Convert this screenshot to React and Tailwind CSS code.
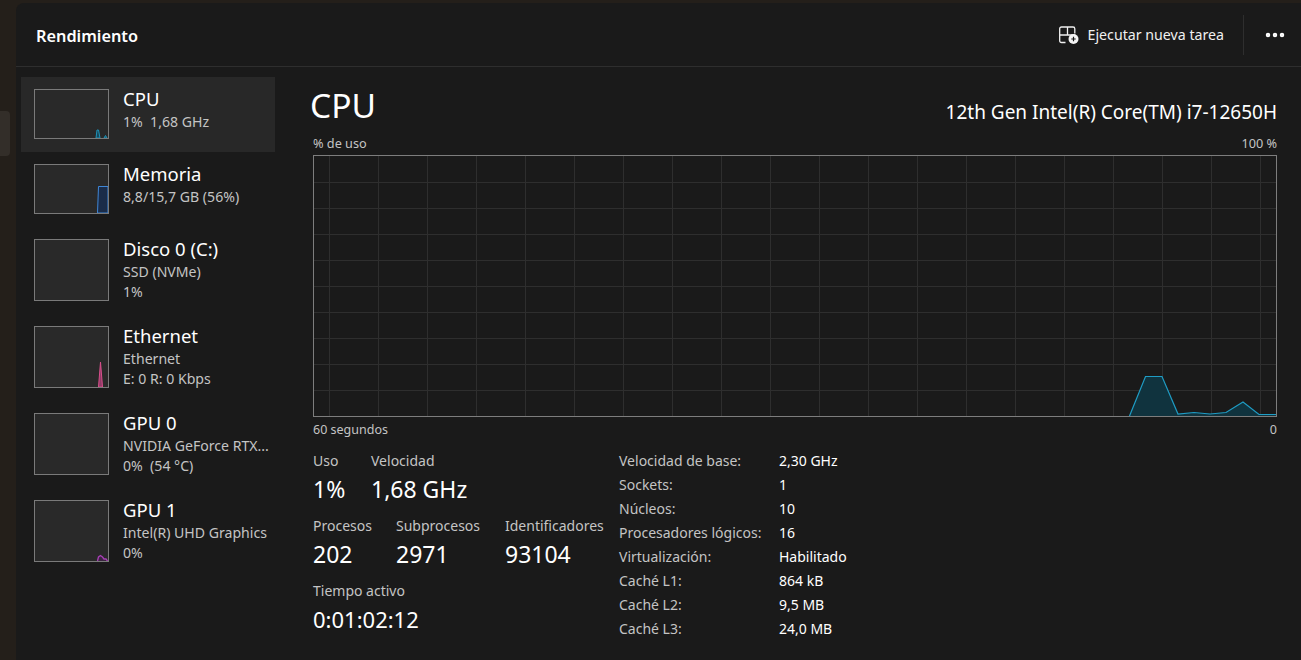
import {MoreHorizontal} from 'lucide-react';

const font = {fontFamily: '"Noto Sans", sans-serif'};

const devices = [
  {name: 'CPU', lines: ['1%\u00a0\u00a01,68 GHz'], active: true, h: 'h-[50px]', item: 'h-[75px]', graph: 'cpu'},
  {name: 'Memoria', lines: ['8,8/15,7 GB (56%)'], h: 'h-[50px]', item: 'h-[75px]', graph: 'mem'},
  {name: 'Disco 0 (C:)', lines: ['SSD (NVMe)', '1%'], h: 'h-[62px]', item: 'h-[87px]'},
  {name: 'Ethernet', lines: ['Ethernet', 'E: 0 R: 0 Kbps'], h: 'h-[62px]', item: 'h-[87px]', graph: 'eth'},
  {name: 'GPU 0', lines: ['NVIDIA GeForce RTX...', '0%\u00a0\u00a0(54 °C)'], h: 'h-[62px]', item: 'h-[87px]'},
  {name: 'GPU 1', lines: ['Intel(R) UHD Graphics', '0%'], h: 'h-[62px]', item: 'h-[87px]', graph: 'gpu'},
];

const specs = [
  ['Velocidad de base:', '2,30 GHz'],
  ['Sockets:', '1'],
  ['Núcleos:', '10'],
  ['Procesadores lógicos:', '16'],
  ['Virtualización:', 'Habilitado'],
  ['Caché L1:', '864 kB'],
  ['Caché L2:', '9,5 MB'],
  ['Caché L3:', '24,0 MB'],
];

function Spark({type}) {
  if (type === 'cpu') {
    return (
      <svg className="absolute inset-0 w-full h-full" viewBox="0 0 73 48" preserveAspectRatio="none">
        <path d="M61 48 L62 40 L63.500 40 L65 48 Z" fill="#17495c" stroke="#1f93b8" strokeWidth="1" />
        <path d="M69 48 L70.500 45.500 L72 48 Z" fill="#17495c" stroke="#1f93b8" strokeWidth="1" />
      </svg>
    );
  }
  if (type === 'mem') {
    return (
      <svg className="absolute inset-0 w-full h-full" viewBox="0 0 73 48" preserveAspectRatio="none">
        <path d="M62.500 48 L63.500 21.500 L73 21.500 L73 48 Z" fill="#1a2c49" stroke="#3f86d6" strokeWidth="1" />
      </svg>
    );
  }
  if (type === 'eth') {
    return (
      <svg className="absolute inset-0 w-full h-full" viewBox="0 0 73 60" preserveAspectRatio="none">
        <path d="M63.500 60 L65.500 35 L67.500 60 Z" fill="#8f3a66" stroke="#d84f8b" strokeWidth="1" />
      </svg>
    );
  }
  if (type === 'gpu') {
    return (
      <svg className="absolute inset-0 w-full h-full" viewBox="0 0 73 60" preserveAspectRatio="none">
        <path d="M62.500 60 L63.500 56 L65.500 54.500 L67.500 56 L69 58 L71 58 L72.500 60" fill="#3a2440" stroke="#a83fb5" strokeWidth="1.300" />
      </svg>
    );
  }
  return null;
}

function DeviceItem({device}) {
  return (
    <div className={`${device.item} pl-[13px] pt-3 flex gap-[14px] ${device.active ? 'bg-[#282828]' : ''}`}>
      <div className={`relative w-[75px] ${device.h} border border-[#7a7a7a] bg-[#292929] shrink-0 overflow-hidden`}>
        <Spark type={device.graph} />
      </div>
      <div className="min-w-0 -mt-[2px]">
        <div className="text-[18.500px] leading-[24px] text-white">{device.name}</div>
        <div className="mt-[1px]">
          {device.lines.map((line) => (
            <div key={line} className="text-[14.100px] leading-[20px] text-[#c4c4c4] whitespace-nowrap">{line}</div>
          ))}
        </div>
      </div>
    </div>
  );
}

function UsageChart() {
  const verticals = [];
  for (let x = 16.5; x < 963; x += 49) verticals.push(x);
  const horizontals = [];
  for (let y = 27.5; y < 260; y += 26) horizontals.push(y);
  return (
    <svg className="block w-[964px] h-[262px]" viewBox="0 0 964 262">
      {verticals.map((x) => <line key={x} x1={x} x2={x} y1="0" y2="262" stroke="#2e2e2e" />)}
      {horizontals.map((y) => <line key={y} x1="0" x2="964" y1={y} y2={y} stroke="#2e2e2e" />)}
      <path
        d="M816.500 261 L832.500 221.500 L849 221.500 L865 259 L881 257.500 L897 259 L913 257.500 L930 247 L946 259.500 L963 259.500 L963 261 Z"
        fill="#10333e"
        stroke="none"
      />
      <path
        d="M816.500 261 L832.500 221.500 L849 221.500 L865 259 L881 257.500 L897 259 L913 257.500 L930 247 L946 259.500 L963 259.500"
        fill="none"
        stroke="#1f9cc4"
        strokeWidth="1.200"
      />
      <rect x="0.500" y="0.500" width="963" height="261" fill="none" stroke="#7d7d7d" />
    </svg>
  );
}

function Stat({label, value, className, valueClass = 'text-[23px]'}) {
  return (
    <div className={className}>
      <div className="text-[14px] leading-[18px] text-[#c4c4c4] whitespace-nowrap">{label}</div>
      <div className={`${valueClass} leading-[32px] mt-[3px] text-white whitespace-nowrap`}>{value}</div>
    </div>
  );
}

export default function App() {
  return (
    <div style={font} className="w-[1301px] h-[660px] bg-[#241f1a] overflow-hidden relative">
      <div className="absolute left-0 top-[111px] w-[10px] h-[45px] bg-[#332e29] rounded-r-[4px]"></div>
      <div className="ml-4 mt-[3px] h-[657px] bg-[#1a1a1a] rounded-tl-lg">
        {/* Header */}
        <header className="h-[64px] border-b border-[#2e2e2e] flex items-center pl-5 pr-[14px]">
          <div className="text-[16.300px] font-semibold text-white flex-1 pt-[4px]">Rendimiento</div>
          <div className="flex items-center">
            <svg width="20" height="18" viewBox="0 0 20 18" fill="none" className="mr-[9px]">
              <path d="M6.500 16.500H2.500C1.400 16.500 0.700 15.700 0.700 14.700V2.700C0.700 1.700 1.400 1 2.500 1H14C15 1 15.800 1.700 15.800 2.700V7.500M0.700 9H15.800M8.500 1V9" stroke="#f0f0f0" strokeWidth="1.300" />
              <circle cx="14.500" cy="13" r="5" fill="#f5f5f5" />
              <path d="M14.500 10.800V15.200M12.300 13H16.700" stroke="#1a1a1a" strokeWidth="1.200" />
            </svg>
            <span className="text-[14.200px] text-[#f0f0f0]">Ejecutar nueva tarea</span>
            <div className="w-px h-10 bg-[#2e2e2e] ml-[19px] mr-[19px]"></div>
            <MoreHorizontal size={24} strokeWidth={2.500} className="text-white" />
          </div>
        </header>

        <div className="flex">
          {/* Sidebar */}
          <aside className="w-[259px] pl-[5px] pt-[10px] shrink-0">
            {devices.map((device) => <DeviceItem key={device.name} device={device} />)}
          </aside>

          {/* Main */}
          <main className="ml-[38px] w-[964px]">
            <div className="flex items-end justify-between h-[64px]">
              <h1 className="text-[33.500px] leading-[44px] text-white pb-[4px] -ml-[3px]">CPU</h1>
              <div className="text-[19px] leading-[24px] text-white pb-[7px]">12th Gen Intel(R) Core(TM) i7-12650H</div>
            </div>
            <div className="flex justify-between text-[12.700px] leading-[16px] text-[#c4c4c4] mt-[4px] mb-[4px]">
              <span>% de uso</span>
              <span>100 %</span>
            </div>
            <UsageChart />
            <div className="flex justify-between text-[12.500px] leading-[16px] text-[#c4c4c4] mt-[5px]">
              <span>60 segundos</span>
              <span>0</span>
            </div>

            <div className="flex mt-[14px]">
              <div className="w-[306px]">
                <div className="flex">
                  <Stat label="Uso" value="1%" className="w-[58px]" />
                  <Stat label="Velocidad" value="1,68 GHz" />
                </div>
                <div className="flex mt-[12px]">
                  <Stat label="Procesos" value="202" className="w-[83px]" />
                  <Stat label="Subprocesos" value="2971" className="w-[109px]" />
                  <Stat label="Identificadores" value="93104" />
                </div>
                <Stat label="Tiempo activo" value="0:01:02:12" className="mt-[12px]" valueClass="text-[22px]" />
              </div>
              <div className="grid grid-cols-[160px_1fr] text-[14px] leading-[24px] -mt-[3px]">
                {specs.map(([label, value]) => (
                  <div key={label} className="contents">
                    <span className="text-[#c4c4c4] whitespace-nowrap">{label}</span>
                    <span className="text-white whitespace-nowrap">{value}</span>
                  </div>
                ))}
              </div>
            </div>
          </main>
        </div>
      </div>
    </div>
  );
}
